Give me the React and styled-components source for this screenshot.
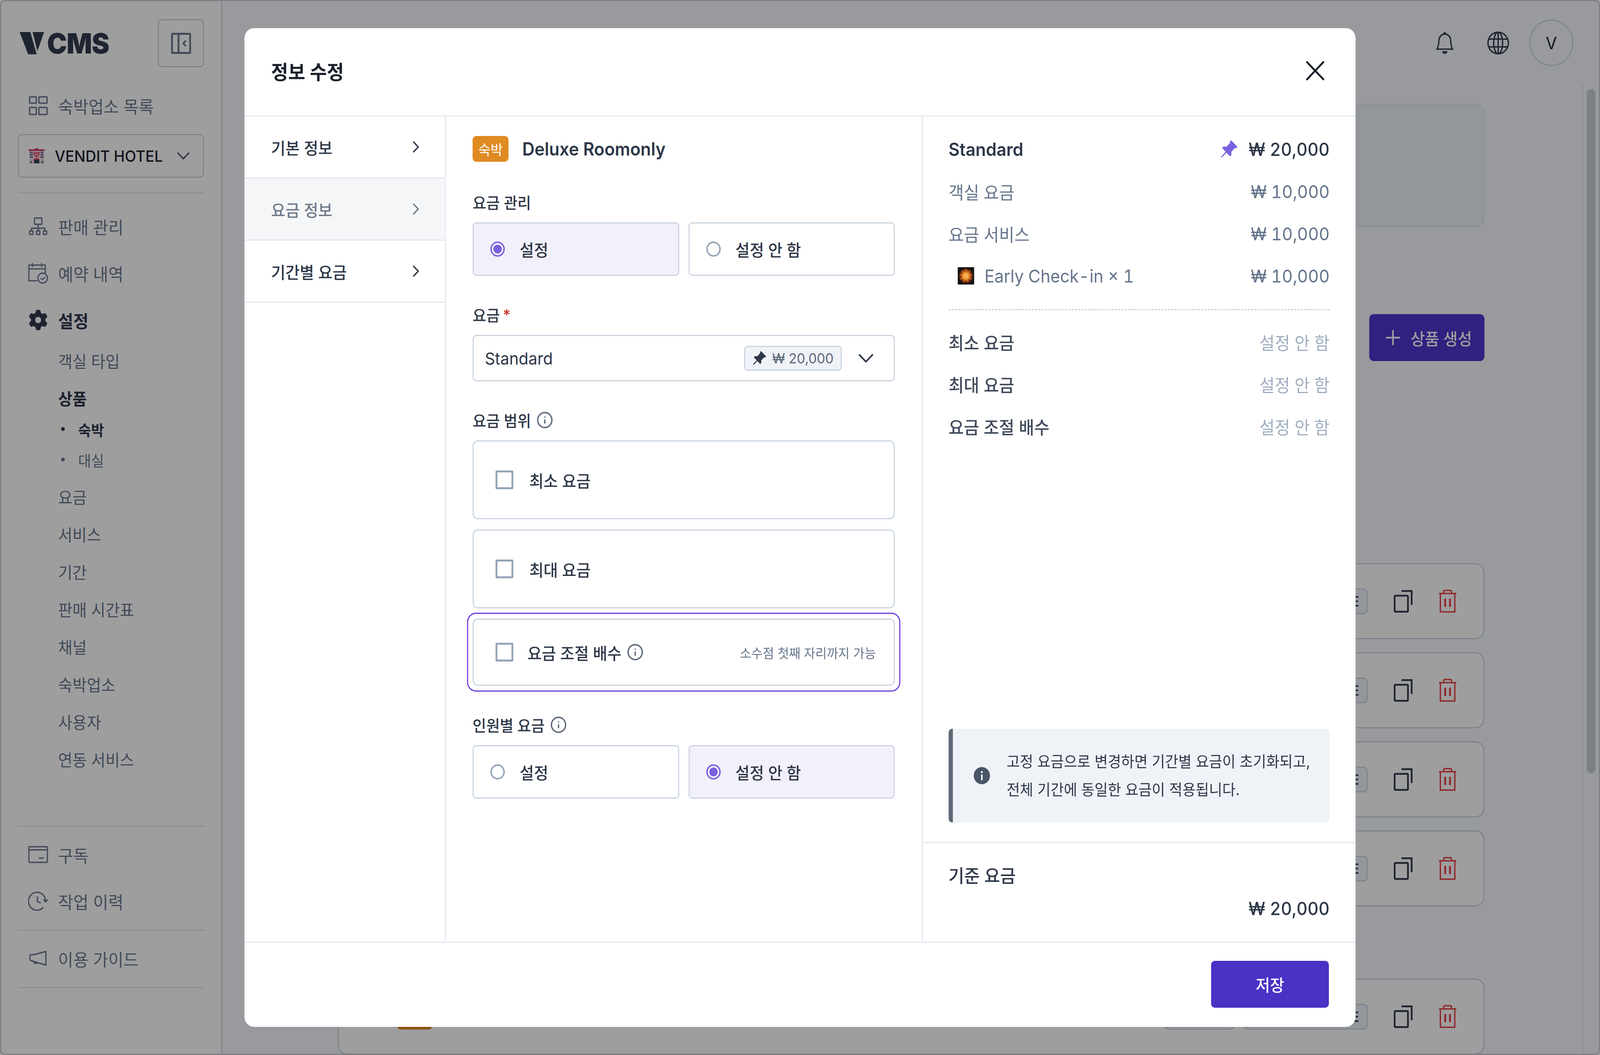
import React from 'react'
import styled, { createGlobalStyle } from 'styled-components'
import { ChevronDown, ChevronRight, Info, Plus, X } from 'lucide-react'
import { BsBell, BsPinAngleFill } from 'react-icons/bs'
import { FaGear } from 'react-icons/fa6'

const FONT = `Inter, "Noto Sans CJK KR", "Noto Sans", sans-serif`

const GlobalStyle = createGlobalStyle`
  html, body {
    margin: 0;
    padding: 0;
    background: #fff;
    overflow: hidden;
  }
  * {
    box-sizing: border-box;
  }
  body {
    font-family: ${FONT};
    color: #2d3748;
  }
`

// the page is designed at 4320 wide, the window can come up narrower
const Stage = styled.div`
  position: relative;
  width: 4320px;
  height: 2700px;
  overflow: hidden;
  transform-origin: 0 0;
`

const Frame = styled.div`
  width: 4320px;
  height: 2700px;
  display: flex;
  overflow: hidden;
  border: 3px solid #cacdd2;
  border-radius: 14px;
  background: #f7f8fc;
`

/* ---------- sidebar ---------- */

const Sidebar = styled.aside`
  width: 597px;
  flex: none;
  display: flex;
  flex-direction: column;
  padding: 46px 46px 168px 45px;
  background: #fff;
  border-right: 3px solid #cbd5e0;
`

const TopRow = styled.div`
  display: flex;
  align-items: center;
  justify-content: space-between;
  padding-left: 5px;
  margin-bottom: 50px;
`

const Logo = styled.div`
  display: flex;
  align-items: center;
  gap: 8px;
  color: #2f3a4b;
`

const LogoWord = styled.span`
  font-size: 72px;
  line-height: 60px;
  font-weight: 900;
  letter-spacing: -1px;
`

const ToggleButton = styled.div`
  width: 125px;
  height: 123px;
  display: flex;
  align-items: center;
  justify-content: center;
  border: 3px solid #cbd5e0;
  border-radius: 12px;
  color: #6a788d;
`

const NavItem = styled.div`
  height: 96px;
  display: flex;
  align-items: center;
  padding-left: 28px;
  font-size: 44.5px;
  font-weight: ${p => (p.$active ? 600 : 400)};
  color: ${p => (p.$active ? '#2d3748' : '#6a788d')};
`

const NavIcon = styled.span`
  width: 54px;
  flex: none;
  display: flex;
  justify-content: center;
  margin-right: 27px;
`

const HotelSelect = styled.div`
  height: 112px;
  flex: none;
  margin-top: 25px;
  margin-bottom: 37px;
  display: flex;
  align-items: center;
  padding: 0 24px 0 25px;
  border: 3px solid #cbd5e0;
  border-radius: 12px;
  font-size: 40px;
  font-weight: 500;
  color: #1a202c;
`

const HotelName = styled.span`
  flex: 1;
  margin-left: 26px;
`

const Divider = styled.div`
  height: 3px;
  flex: none;
  background: #e2e8f0;
`

const NavGroup = styled.div`
  display: flex;
  flex-direction: column;
  gap: 24px;
  margin-top: 36px;
`

const SubList = styled.div`
  display: flex;
  flex-direction: column;
  margin-top: 7px;
  padding-left: 109px;
`

const SubItem = styled.div`
  height: 96px;
  display: flex;
  align-items: center;
  font-size: 42px;
  font-weight: ${p => (p.$active ? 600 : 400)};
  color: ${p => (p.$active ? '#2d3748' : '#667489')};
`

const LeafList = styled.div`
  display: flex;
  flex-direction: column;
  margin: -7px 0 7px;
`

const Leaf = styled.div`
  height: 78px;
  display: flex;
  align-items: center;
  gap: 36px;
  padding-left: 8px;
  font-size: 38px;
  font-weight: ${p => (p.$active ? 600 : 400)};
  color: ${p => (p.$active ? '#2d3748' : '#667489')};

  &::before {
    content: '';
    width: 10px;
    height: 10px;
    border-radius: 50%;
    background: currentColor;
  }
`

const BottomNav = styled.div`
  margin-top: auto;
  display: flex;
  flex-direction: column;
`

const BottomGroup = styled.div`
  display: flex;
  flex-direction: column;
  gap: 23px;
  padding: 23px 0 25px;
`

/* ---------- main page behind the dialog ---------- */

const Main = styled.main`
  flex: 1;
  min-width: 0;
  display: flex;
  flex-direction: column;
`

const MainHeader = styled.header`
  height: 213px;
  flex: none;
  display: flex;
  align-items: center;
  justify-content: flex-end;
  padding-right: 69px;
  color: #2d3748;
`

const BellBox = styled.span`
  display: flex;
  margin-right: 86px;
`

const GlobeBox = styled.span`
  display: flex;
  margin-right: 54px;
`

const Avatar = styled.div`
  width: 119px;
  height: 119px;
  display: flex;
  align-items: center;
  justify-content: center;
  border: 3px solid #cbd5e0;
  border-radius: 50%;
  font-size: 44px;
  color: #1a202c;
`

const MainBody = styled.div`
  flex: 1;
  min-height: 0;
  display: flex;
`

const Content = styled.div`
  flex: 1;
  min-width: 0;
  overflow: hidden;
  display: flex;
  flex-direction: column;
  padding: 49px 264px 0 312px;
`

const Scrollbar = styled.div`
  width: 45px;
  flex: none;
  padding: 12px 9px 0 9px;
  border-left: 3px solid #e2e8f0;
`

const ScrollThumb = styled.div`
  width: 24px;
  height: 1751px;
  border-radius: 12px;
  background: #c8ced6;
`

const SummaryCard = styled.div`
  height: 316px;
  flex: none;
  border: 3px solid #e2e8f0;
  border-radius: 24px;
  background: #edf2f7;
`

const CreateRow = styled.div`
  display: flex;
  justify-content: flex-end;
  margin: 223px 0 517px;
`

const CreateButton = styled.div`
  width: 311px;
  height: 120px;
  display: flex;
  align-items: center;
  justify-content: center;
  gap: 18px;
  border-radius: 12px;
  background: #4a35cc;
  color: #fff;
  font-size: 42px;
  font-weight: 500;
`

const ProductCard = styled.div`
  height: 195px;
  flex: none;
  display: flex;
  align-items: center;
  padding: 0 73px 0 157px;
  margin-top: ${p => p.$top}px;
  border: 3px solid #cbd5e0;
  border-radius: 24px;
  background: #fff;
`

const ProductTag = styled.span`
  width: 95px;
  height: 66px;
  border-radius: 10px;
  background: #e08a22;
`

const ProductActions = styled.div`
  margin-left: auto;
  display: flex;
  align-items: center;
`

const StatusButton = styled.div`
  width: ${p => p.$w}px;
  height: 66px;
  display: flex;
  align-items: center;
  justify-content: flex-end;
  margin-right: ${p => p.$gap}px;
  padding-right: 20px;
  border: 3px solid #cbd5e0;
  border-radius: 12px;
  background: #edf2f7;
  font-size: 36px;
  font-weight: 500;
  color: #2d3748;
`

const CopyBox = styled.span`
  display: flex;
  margin-right: 70px;
  color: #2d3748;
`

const TrashBox = styled.span`
  display: flex;
  color: #e53e3e;
`

/* ---------- dialog ---------- */

const Overlay = styled.div`
  position: absolute;
  inset: 0;
  display: flex;
  align-items: center;
  justify-content: center;
  background: rgba(4, 6, 9, 0.39);
`

const Modal = styled.div`
  width: 3000px;
  height: 2556px;
  display: flex;
  flex-direction: column;
  border-radius: 26px;
  background: #fff;
  overflow: hidden;
`

const ModalHeader = styled.div`
  height: 226px;
  flex: none;
  display: flex;
  align-items: center;
  justify-content: space-between;
  padding: 0 65px 6px 72px;
  border-bottom: 3px solid #e2e8f0;
`

const ModalTitle = styled.h2`
  margin: 0;
  font-size: 50px;
  font-weight: 600;
  color: #1a202c;
`

const ModalBody = styled.div`
  flex: 1;
  min-height: 0;
  display: grid;
  grid-template-columns: 544px 1285px 1171px;
`

const Tabs = styled.nav`
  display: flex;
  flex-direction: column;
  border-right: 3px solid #e2e8f0;
`

const Tab = styled.div`
  height: 159px;
  flex: none;
  display: flex;
  align-items: center;
  justify-content: space-between;
  padding: 0 53px 0 72px;
  border-bottom: 3px solid #e2e8f0;
  font-size: 42px;
  font-weight: 500;
  background: ${p => (p.$active ? '#f5f6f8' : '#fff')};
  color: ${p => (p.$active ? '#6f7a8a' : '#2d3748')};
`

const FormPanel = styled.div`
  display: flex;
  flex-direction: column;
  padding: 50px 73px 0 72px;
`

const TitleRow = styled.div`
  display: flex;
  align-items: center;
  gap: 37px;
  margin-bottom: 73px;
`

const TypeTag = styled.span`
  width: 97px;
  height: 66px;
  display: flex;
  align-items: center;
  justify-content: center;
  border-radius: 10px;
  background: #e08a22;
  color: #fff;
  font-size: 36px;
`

const ProductTitle = styled.span`
  font-size: 46px;
  font-weight: 600;
  color: #2d3748;
`

const Section = styled.section`
  display: flex;
  flex-direction: column;
  margin-bottom: 69px;
`

const Label = styled.div`
  height: 60px;
  display: flex;
  align-items: center;
  gap: 14px;
  margin-bottom: 22px;
  font-size: 40px;
  font-weight: 500;
  color: #2d3748;
`

const Required = styled.span`
  margin-left: -6px;
  color: #d0342c;
`

const RadioRow = styled.div`
  display: grid;
  grid-template-columns: 1fr 1fr;
  gap: 25px;
`

const RadioCard = styled.div`
  height: 137px;
  display: flex;
  align-items: center;
  gap: 40px;
  padding-left: 45px;
  border: 3px solid #cbd5e0;
  border-radius: 10px;
  background: ${p => (p.$checked ? '#f2f0fb' : '#fff')};
  font-size: 42px;
  font-weight: 500;
  color: #2d3748;
`

const RadioMark = styled.span`
  width: 39px;
  height: 39px;
  flex: none;
  display: flex;
  align-items: center;
  justify-content: center;
  border: 4px solid ${p => (p.$checked ? '#7b61e0' : '#94a3b8')};
  border-radius: 50%;
  background: #fff;

  &::after {
    content: '';
    width: 23px;
    height: 23px;
    border-radius: 50%;
    background: ${p => (p.$checked ? '#7b61e0' : 'transparent')};
  }
`

const SelectBox = styled.div`
  height: 119px;
  display: flex;
  align-items: center;
  padding: 0 40px 0 30px;
  border: 3px solid #cbd5e0;
  border-radius: 10px;
  font-size: 43px;
  color: #2d3748;
`

const SelectValue = styled.span`
  flex: 1;
`

const PricePill = styled.span`
  width: 264px;
  height: 64px;
  display: flex;
  align-items: center;
  gap: 15px;
  margin-right: 30px;
  padding-left: 18px;
  border: 3px solid #cbd5e0;
  border-radius: 10px;
  background: #eff2f7;
  font-size: 36px;
  color: #5d6879;
`

const CheckList = styled.div`
  display: flex;
  flex-direction: column;
  gap: 26px;
  margin-bottom: 1px;
`

const CheckCard = styled.div`
  position: relative;
  height: ${p => (p.$focused ? 172 : 202)}px;
  display: flex;
  align-items: center;
  padding: 0 48px 0 59px;
  border: 3px solid #cbd5e0;
  border-radius: 14px;
  font-size: 42px;
  font-weight: 500;
  color: #2d3748;

  ${p =>
    p.$focused &&
    `&::after {
      content: '';
      position: absolute;
      inset: -18px;
      border: 3px solid #6d3fd9;
      border-radius: 24px;
    }`}
`

const CheckMark = styled.span`
  width: 48px;
  height: 48px;
  flex: none;
  margin-right: ${p => p.$gap}px;
  border: 5px solid #94a3b8;
  border-radius: 3px;
`

const CheckLabel = styled.span`
  display: flex;
  align-items: center;
  gap: 14px;
`

const CheckHint = styled.span`
  margin-left: auto;
  font-size: 33.5px;
  font-weight: 400;
  color: #64748b;
`

const SummaryPanel = styled.div`
  display: flex;
  flex-direction: column;
  min-height: 0;
  border-left: 3px solid #e2e8f0;
`

const SummaryTop = styled.div`
  flex: 1;
  display: flex;
  flex-direction: column;
  padding: 30px 70px 50px 69px;
`

const PriceRow = styled.div`
  height: 108px;
  flex: none;
  display: flex;
  align-items: center;
  font-size: ${p => (p.$strong ? 46 : 45)}px;
  font-weight: ${p => (p.$strong ? 500 : 400)};
  font-variant-numeric: tabular-nums;
  color: ${p => (p.$strong ? '#2d3748' : '#64748b')};
`

const RowName = styled.span`
  flex: 1;
  display: flex;
  align-items: center;
  gap: 27px;
  padding-left: ${p => (p.$indent ? 24 : 0)}px;
  font-weight: ${p => (p.$strong ? 600 : 'inherit')};
`

const LimitName = styled.span`
  flex: 1;
  font-weight: 500;
  color: #414b5c;
`

const LimitValue = styled.span`
  color: #a0aec0;
`

const PinBox = styled.span`
  display: flex;
  margin-right: 28px;
  color: #7b61e0;
`

const DashLine = styled.div`
  flex: none;
  margin: 31px 0 27px;
  border-top: 3px dashed #cbd5e0;
`

const Notice = styled.div`
  height: 240px;
  flex: none;
  margin-top: auto;
  display: flex;
  align-items: center;
  gap: 45px;
  padding: 0 20px 0 56px;
  border-left: 12px solid #5d6879;
  border-radius: 10px;
  background: #eff2f7;
  font-size: 39px;
  line-height: 72px;
  color: #2d3748;
`

const NoticeText = styled.p`
  margin: 0;
  white-space: nowrap;
`

const BasePrice = styled.div`
  height: 255px;
  flex: none;
  display: flex;
  flex-direction: column;
  padding: 41px 70px 0 69px;
  border-top: 3px solid #e2e8f0;
  font-size: 46px;
  font-weight: 500;
  color: #2d3748;
`

const BaseName = styled.div`
  height: 84px;
  line-height: 84px;
`

const BaseValue = styled.div`
  height: 84px;
  line-height: 84px;
  text-align: right;
  font-variant-numeric: tabular-nums;
`

const ModalFooter = styled.div`
  height: 218px;
  flex: none;
  display: flex;
  align-items: center;
  justify-content: flex-end;
  padding: 0 72px 4px 0;
  border-top: 3px solid #e2e8f0;
`

const SaveButton = styled.div`
  width: 318px;
  height: 120px;
  display: flex;
  align-items: center;
  justify-content: center;
  border-radius: 10px;
  background: #4a32c5;
  color: #fff;
  font-size: 42px;
  font-weight: 500;
`

/* ---------- drawings ---------- */

const LogoMark = () => (
  <svg width="66" height="59" viewBox="0 0 66 59" fill="currentColor">
    <polygon points="0,1 29,1 46,58 23,58" />
    <polygon points="35,1 66,1 48,50" />
  </svg>
)

const PanelIcon = () => (
  <svg width="54" height="54" viewBox="0 0 54 54" fill="none" stroke="currentColor" strokeWidth="5">
    <rect x="2.5" y="2.5" width="49" height="49" rx="1" />
    <path d="M20 2v50" />
    <path d="M40 20l-7 7 7 7" strokeWidth="4.5" />
  </svg>
)

const GridIcon = () => (
  <svg width="51" height="49" viewBox="0 0 51 49" fill="none" stroke="currentColor" strokeWidth="3.6">
    <rect x="2" y="2" width="18" height="16" rx="1.5" />
    <rect x="27" y="2" width="22" height="16" rx="1.5" />
    <rect x="2" y="29" width="18" height="18" rx="1.5" />
    <rect x="27" y="29" width="22" height="18" rx="1.5" />
  </svg>
)

const OrgIcon = () => (
  <svg width="50" height="46" viewBox="0 0 50 46" fill="none" stroke="currentColor" strokeWidth="3.4">
    <rect x="15" y="2" width="20" height="16" rx="1.5" />
    <path d="M25 18v10M7 35v-7h36v7M25 28v7" />
    <rect x="2" y="35" width="9" height="9" rx="1.5" />
    <rect x="20.5" y="35" width="9" height="9" rx="1.5" />
    <rect x="39" y="35" width="9" height="9" rx="1.5" />
  </svg>
)

const CalendarIcon = () => (
  <svg width="55" height="56" viewBox="0 0 55 56" fill="none" stroke="currentColor" strokeWidth="3.4">
    <path d="M26 48H2V7h45v22" />
    <path d="M2 17h45M12 2v10M37 2v10" />
    <circle cx="40" cy="41" r="13" />
    <path d="M34 41l5 4 8-7" strokeWidth="3" />
  </svg>
)

const CardIcon = () => (
  <svg width="54" height="44" viewBox="0 0 54 44" fill="none" stroke="currentColor" strokeWidth="3.4">
    <rect x="2" y="2" width="50" height="40" rx="2" />
    <path d="M2 10h50M29 31h13" />
  </svg>
)

const HistoryIcon = () => (
  <svg width="54" height="50" viewBox="0 0 54 50" fill="none" stroke="currentColor" strokeWidth="3.4">
    <path d="M47 25A23 23 0 1 0 41 41" />
    <path d="M41 21l6 6 6-6" />
    <path d="M25 13v13l9 4" />
  </svg>
)

const MegaphoneIcon = () => (
  <svg width="48" height="40" viewBox="0 0 48 40" fill="none" stroke="currentColor" strokeWidth="3.4">
    <path d="M45 2L14 10H6Q2 10 2 14V22Q2 26 6 26L45 37Z" strokeLinejoin="round" />
    <path d="M11 27Q13 34 22 32" />
  </svg>
)

const GlobeIcon = () => (
  <svg width="60" height="60" viewBox="0 0 60 60" fill="none" stroke="currentColor" strokeWidth="3.6">
    <circle cx="30" cy="30" r="27.5" />
    <ellipse cx="30" cy="30" rx="12" ry="27.5" />
    <path d="M30 3v54M6 20h48M6 40h48" />
  </svg>
)

const CopyIcon = () => (
  <svg width="52" height="58" viewBox="0 0 52 58" fill="none" stroke="currentColor" strokeWidth="4.6">
    <rect x="2.5" y="14.5" width="36" height="41" rx="2" />
    <path d="M21 2.5h27.5V38" />
  </svg>
)

const TrashIcon = () => (
  <svg width="47" height="59" viewBox="0 0 47 59" fill="none" stroke="currentColor" strokeWidth="3.6">
    <path d="M0 10h47" />
    <path d="M13 10V5Q13 2 16 2H31Q34 2 34 5V10" />
    <path d="M4 10V57H43V10" />
    <path d="M17 23v21M30 23v21" strokeWidth="5" />
  </svg>
)

const AlertInfoIcon = () => (
  <svg width="44" height="44" viewBox="0 0 44 44" style={{ flex: 'none' }}>
    <circle cx="22" cy="22" r="22" fill="#4a5568" />
    <circle cx="22" cy="13" r="2.6" fill="#fff" />
    <rect x="20" y="19" width="4" height="15" rx="1" fill="#fff" />
  </svg>
)

const HotelIcon = () => (
  <svg width="46" height="46" viewBox="0 0 46 46">
    <rect x="3" y="8" width="40" height="34" fill="#f3ccd6" />
    <path d="M0 10Q1 6 5 6H17Q23 0 29 6H41Q45 6 46 10Z" fill="#cf3f62" />
    <path d="M23 27C14 21 13 15 17 13.5C20 12.5 22 14 23 15.5C24 14 26 12.5 29 13.5C33 15 32 21 23 27Z" fill="#d93a55" />
    <path d="M20 16v7M26 16v7M20 19.5h6" stroke="#fff" strokeWidth="1.6" />
    {[5, 9, 34, 38].map(x =>
      [12, 18, 24].map(y => <rect key={`${x}-${y}`} x={x} y={y} width="3" height="4" fill="#3f5f80" />)
    )}
    <rect x="3" y="30" width="40" height="2" fill="#efe2cf" />
    <rect x="16" y="33" width="14" height="9" fill="#2e3b4c" />
    <path d="M14 33Q23 25 32 33Z" fill="#cf3f62" />
    <rect x="5" y="36" width="5" height="6" fill="#5d8f4e" />
    <rect x="36" y="36" width="5" height="6" fill="#5d8f4e" />
  </svg>
)

const SparklerIcon = () => (
  <svg width="46" height="60" viewBox="0 0 46 60">
    <defs>
      <radialGradient id="burst">
        <stop offset="0" stopColor="#fff3c4" />
        <stop offset="0.35" stopColor="#f59a2c" />
        <stop offset="0.75" stopColor="#8a3410" />
        <stop offset="1" stopColor="#15100e" />
      </radialGradient>
    </defs>
    <rect x="0.5" y="7.5" width="45" height="45" fill="#15100e" stroke="#dfe3e8" />
    <rect x="3" y="10" width="40" height="40" fill="url(#burst)" />
    {[0, 40, 80, 120, 160, 200, 240, 280, 320].map(a => (
      <path key={a} d="M23 30V12" stroke="#f6a245" strokeWidth="1" transform={`rotate(${a} 23 30)`} />
    ))}
  </svg>
)

const subMenus = ['요금', '서비스', '기간', '판매 시간표', '채널', '숙박업소', '사용자', '연동 서비스']

const ProductRow = ({ top }) => (
  <ProductCard $top={top}>
    <ProductTag />
    <ProductActions>
      <StatusButton $w={192} $gap={22} />
      <StatusButton $w={336} $gap={70}>E</StatusButton>
      <CopyBox><CopyIcon /></CopyBox>
      <TrashBox><TrashIcon /></TrashBox>
    </ProductActions>
  </ProductCard>
)

const Radio = ({ checked, children }) => (
  <RadioCard $checked={checked}>
    <RadioMark $checked={checked} />
    {children}
  </RadioCard>
)

const InfoMark = () => <Info size={46} strokeWidth={1.9} color="#5d6879" />

const App = () => (
  <>
    <GlobalStyle />
    <Stage style={{ transform: `scaleX(${window.innerWidth / 4320})` }}>
      <Frame>
        <Sidebar>
          <TopRow>
            <Logo>
              <LogoMark />
              <LogoWord>CMS</LogoWord>
            </Logo>
            <ToggleButton><PanelIcon /></ToggleButton>
          </TopRow>
          <NavItem>
            <NavIcon><GridIcon /></NavIcon>
            숙박업소 목록
          </NavItem>
          <HotelSelect>
            <HotelIcon />
            <HotelName>VENDIT HOTEL</HotelName>
            <ChevronDown size={58} strokeWidth={1.6} color="#4a5568" />
          </HotelSelect>
          <Divider />
          <NavGroup>
            <NavItem>
              <NavIcon><OrgIcon /></NavIcon>
              판매 관리
            </NavItem>
            <NavItem>
              <NavIcon><CalendarIcon /></NavIcon>
              예약 내역
            </NavItem>
            <NavItem $active>
              <NavIcon><FaGear size={52} /></NavIcon>
              설정
            </NavItem>
          </NavGroup>
          <SubList>
            <SubItem>객실 타입</SubItem>
            <SubItem $active>상품</SubItem>
            <LeafList>
              <Leaf $active>숙박</Leaf>
              <Leaf>대실</Leaf>
            </LeafList>
            {subMenus.map(name => (
              <SubItem key={name}>{name}</SubItem>
            ))}
          </SubList>
          <BottomNav>
            <Divider />
            <BottomGroup>
              <NavItem>
                <NavIcon><CardIcon /></NavIcon>
                구독
              </NavItem>
              <NavItem>
                <NavIcon><HistoryIcon /></NavIcon>
                작업 이력
              </NavItem>
            </BottomGroup>
            <Divider />
            <BottomGroup>
              <NavItem>
                <NavIcon><MegaphoneIcon /></NavIcon>
                이용 가이드
              </NavItem>
            </BottomGroup>
            <Divider />
          </BottomNav>
        </Sidebar>

        <Main>
          <MainHeader>
            <BellBox><BsBell size={56} /></BellBox>
            <GlobeBox><GlobeIcon /></GlobeBox>
            <Avatar>V</Avatar>
          </MainHeader>
          <MainBody>
            <Content>
              <SummaryCard />
              <CreateRow>
                <CreateButton>
                  <Plus size={60} strokeWidth={1.7} />
                  상품 생성
                </CreateButton>
              </CreateRow>
              <ProductRow top={0} />
              <ProductRow top={33} />
              <ProductRow top={33} />
              <ProductRow top={33} />
              <ProductRow top={184} />
            </Content>
            <Scrollbar>
              <ScrollThumb />
            </Scrollbar>
          </MainBody>
        </Main>
      </Frame>

      <Overlay>
        <Modal>
          <ModalHeader>
            <ModalTitle>정보 수정</ModalTitle>
            <X size={88} strokeWidth={1.4} color="#1a202c" />
          </ModalHeader>
          <ModalBody>
            <Tabs>
              <Tab>
                기본 정보
                <ChevronRight size={50} strokeWidth={1.8} />
              </Tab>
              <Tab $active>
                요금 정보
                <ChevronRight size={50} strokeWidth={1.8} />
              </Tab>
              <Tab>
                기간별 요금
                <ChevronRight size={50} strokeWidth={1.8} />
              </Tab>
            </Tabs>

            <FormPanel>
              <TitleRow>
                <TypeTag>숙박</TypeTag>
                <ProductTitle>Deluxe Roomonly</ProductTitle>
              </TitleRow>
              <Section>
                <Label>요금 관리</Label>
                <RadioRow>
                  <Radio checked>설정</Radio>
                  <Radio>설정 안 함</Radio>
                </RadioRow>
              </Section>
              <Section>
                <Label>
                  요금 <Required>*</Required>
                </Label>
                <SelectBox>
                  <SelectValue>Standard</SelectValue>
                  <PricePill>
                    <BsPinAngleFill size={40} color="#2d3748" />
                    ₩ 20,000
                  </PricePill>
                  <ChevronDown size={70} strokeWidth={1.4} color="#2d3748" />
                </SelectBox>
              </Section>
              <Section>
                <Label>
                  요금 범위 <InfoMark />
                </Label>
                <CheckList>
                  <CheckCard>
                    <CheckMark $gap={43} />
                    최소 요금
                  </CheckCard>
                  <CheckCard>
                    <CheckMark $gap={43} />
                    최대 요금
                  </CheckCard>
                  <CheckCard $focused>
                    <CheckMark $gap={38} />
                    <CheckLabel>
                      요금 조절 배수 <InfoMark />
                    </CheckLabel>
                    <CheckHint>소수점 첫째 자리까지 가능</CheckHint>
                  </CheckCard>
                </CheckList>
              </Section>
              <Section>
                <Label>
                  인원별 요금 <InfoMark />
                </Label>
                <RadioRow>
                  <Radio>설정</Radio>
                  <Radio checked>설정 안 함</Radio>
                </RadioRow>
              </Section>
            </FormPanel>

            <SummaryPanel>
              <SummaryTop>
                <PriceRow $strong>
                  <RowName $strong>Standard</RowName>
                  <PinBox><BsPinAngleFill size={50} /></PinBox>
                  ₩ 20,000
                </PriceRow>
                <PriceRow>
                  <RowName>객실 요금</RowName>
                  ₩ 10,000
                </PriceRow>
                <PriceRow>
                  <RowName>요금 서비스</RowName>
                  ₩ 10,000
                </PriceRow>
                <PriceRow>
                  <RowName $indent>
                    <SparklerIcon />
                    Early Check-in × 1
                  </RowName>
                  ₩ 10,000
                </PriceRow>
                <DashLine />
                <PriceRow>
                  <LimitName>최소 요금</LimitName>
                  <LimitValue>설정 안 함</LimitValue>
                </PriceRow>
                <PriceRow>
                  <LimitName>최대 요금</LimitName>
                  <LimitValue>설정 안 함</LimitValue>
                </PriceRow>
                <PriceRow>
                  <LimitName>요금 조절 배수</LimitName>
                  <LimitValue>설정 안 함</LimitValue>
                </PriceRow>
                <Notice>
                  <AlertInfoIcon />
                  <NoticeText>
                    고정 요금으로 변경하면 기간별 요금이 초기화되고,
                    <br />
                    전체 기간에 동일한 요금이 적용됩니다.
                  </NoticeText>
                </Notice>
              </SummaryTop>
              <BasePrice>
                <BaseName>기준 요금</BaseName>
                <BaseValue>₩ 20,000</BaseValue>
              </BasePrice>
            </SummaryPanel>
          </ModalBody>
          <ModalFooter>
            <SaveButton>저장</SaveButton>
          </ModalFooter>
        </Modal>
      </Overlay>
    </Stage>
  </>
)

export default App
